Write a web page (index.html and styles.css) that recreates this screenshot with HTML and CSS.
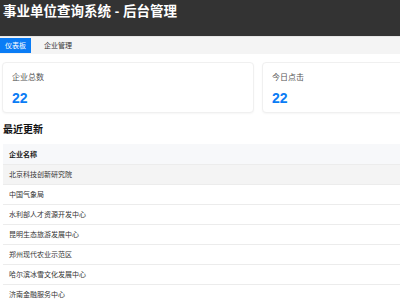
FILE: index.html
```html
<!DOCTYPE html>
<html lang="zh">

<head>
    <meta charset="utf-8">
    <meta name="viewport" content="width=device-width, initial-scale=1.0">
    <title>后台管理</title>
    <link rel="stylesheet" href="styles.css">
</head>

<body>
    <header class="topbar">
        <h1>事业单位查询系统 - 后台管理</h1>
    </header>

    <nav class="menu">
        <a class="menu_link valgt" href="#">仪表板</a>
        <a class="menu_link" href="#">企业管理</a>
    </nav>

    <main>
        <section class="stats">
            <article class="card">
                <p class="card_label">企业总数</p>
                <p class="card_tal">22</p>
            </article>
            <article class="card">
                <p class="card_label">今日点击</p>
                <p class="card_tal">22</p>
            </article>
        </section>

        <h2>最近更新</h2>

        <table class="liste">
            <thead>
                <tr>
                    <th>企业名称</th>
                </tr>
            </thead>
            <tbody>
                <tr class="hover">
                    <td>北京科技创新研究院</td>
                </tr>
                <tr>
                    <td>中国气象局</td>
                </tr>
                <tr>
                    <td>水利部人才资源开发中心</td>
                </tr>
                <tr>
                    <td>昆明生态旅游发展中心</td>
                </tr>
                <tr>
                    <td>郑州现代农业示范区</td>
                </tr>
                <tr>
                    <td>哈尔滨冰雪文化发展中心</td>
                </tr>
                <tr>
                    <td>济南金融服务中心</td>
                </tr>
            </tbody>
        </table>
    </main>
</body></html>
```

FILE: styles.css
```css
* {
    margin: 0;
    padding: 0;
    box-sizing: border-box;
}

body {
    font-family: "Liberation Sans", "Noto Sans CJK SC", sans-serif;
    background-color: white;
    color: #333;
    width: 400px;
    height: 300px;
    overflow: hidden;
}

.topbar {
    background-color: #333;
    height: 37px;
    padding: 0 3px;
    border-bottom: 1px solid #e6e6e6;
}

h1 {
    color: white;
    font-size: 13.5px;
    font-weight: bold;
    line-height: 24px;
}

.menu {
    display: flex;
    gap: 8px;
    height: 17px;
    padding-top: 1px;
    background-color: #f4f4f4;
}

.menu_link {
    display: block;
    height: 15px;
    line-height: 15px;
    padding: 0 5px;
    font-size: 7px;
    color: #333;
    text-decoration: none;
}

.valgt {
    background-color: #0a7cf5;
    color: white;
}

main {
    padding: 8px 3px 0 2px;
}

.stats {
    display: grid;
    grid-template-columns: 252px 252px;
    gap: 8px;
}

.card {
    height: 51px;
    padding: 9px 9px 0;
    border: 1px solid #f0f0f0;
    border-radius: 4px;
    box-shadow: 0 1px 2px rgba(0, 0, 0, 0.04);
    background-color: white;
}

.card_label {
    font-size: 8px;
    line-height: 12px;
    color: #555;
}

.card_tal {
    margin-top: 5px;
    font-size: 14px;
    line-height: 18px;
    font-weight: bold;
    color: #0a7cf5;
}

h2 {
    margin: 10px 0 0 1px;
    font-size: 10px;
    line-height: 14px;
    font-weight: bold;
    color: #111;
}

.liste {
    margin: 7px 0 0 1px;
    width: 420px;
    border-collapse: collapse;
}

th,
td {
    height: 20px;
    padding: 0 6px;
    text-align: left;
    font-size: 7px;
    border-bottom: 1px solid #ececec;
}

th {
    background-color: #f7f8fa;
    font-weight: bold;
    color: #222;
}

.hover td {
    background-color: #f4f4f4;
}
```
